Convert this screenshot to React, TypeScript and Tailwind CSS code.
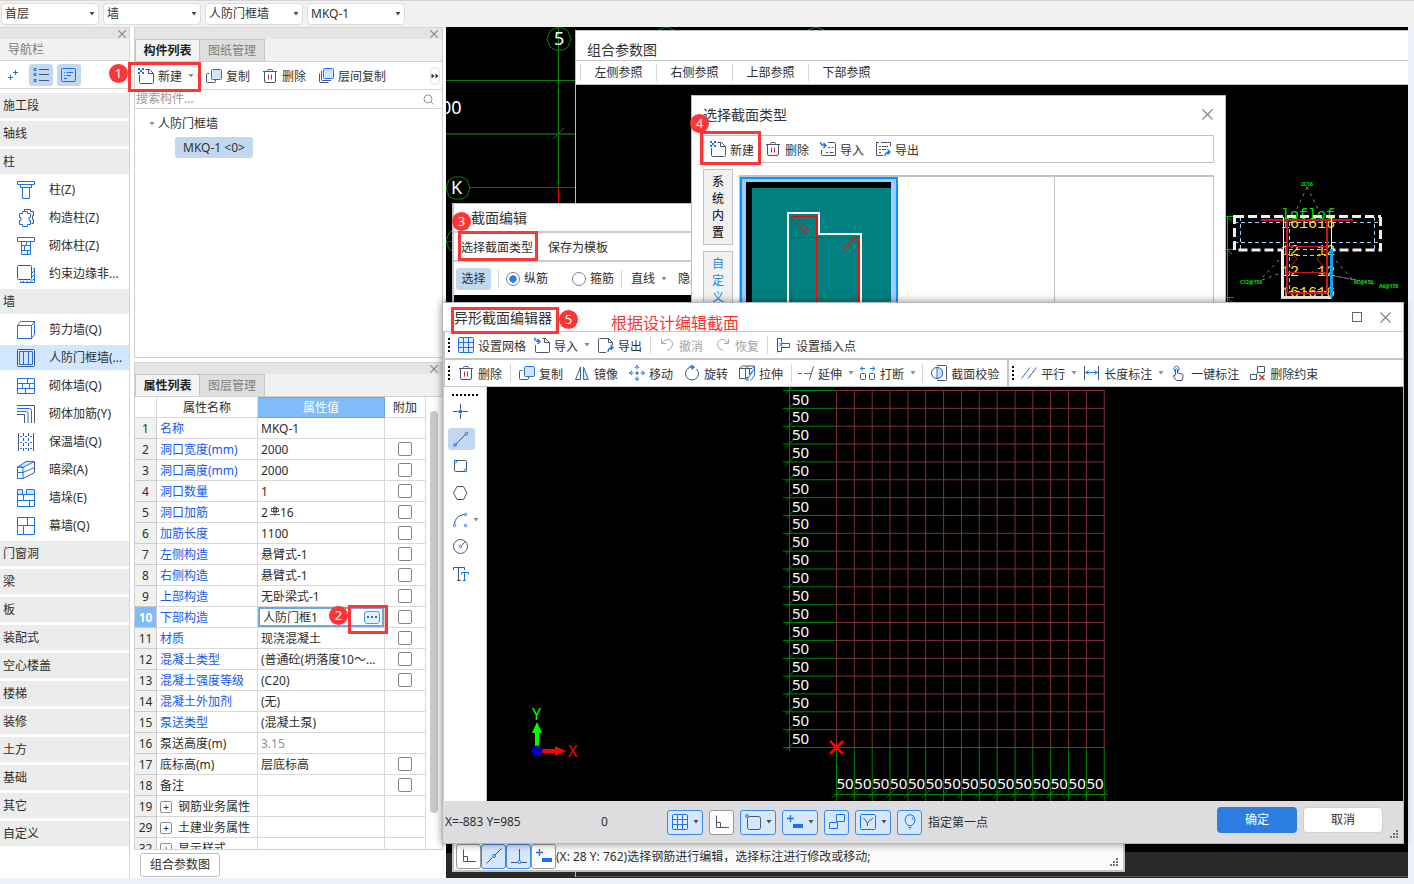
import React from 'react';

const BLUE = '#1a73e8';
const SLATE = '#4a566e';

/* ---------- Icons ---------- */

function Svg({ children, size = 16 }: { children: React.ReactNode; size?: number }) {
  return (
    <svg width={size} height={size} viewBox={`0 0 ${size} ${size}`} fill="none" stroke={SLATE} className="shrink-0" aria-hidden="true">
      {children}
    </svg>
  );
}

const Arrow = ({ dark = false }: { dark?: boolean }) => (
  <svg width="6" height="4" viewBox="0 0 6 4" className="shrink-0" aria-hidden="true">
    <path d="M.5 0h5L3 3.5z" fill={dark ? '#444c5c' : '#8b8b8b'} />
  </svg>
);

const CloseIcon = ({ size = 11 }: { size?: number }) => (
  <svg width={size} height={size} viewBox="0 0 11 11" stroke="#808080" fill="none" aria-hidden="true">
    <path d="M.5.5l10 10M10.5.5l-10 10" strokeWidth={size > 8 ? 1.1 : 1.5} />
  </svg>
);

const NewIcon = () => (
  <Svg>
    <path d="M1.5 7v7.500q0 1 1 1h12q1 0 1-1V5.500l-4-4h-4M10.500 1.500v4h5" />
    <path d="M0 0h2v2H0zM4 0h2v2H4zM2 2h2v2H2zM0 4h2v2H0zM4 4h2v2H4z" fill={BLUE} stroke="none" />
  </Svg>
);

const CopyIcon = () => (
  <Svg>
    <path d="M3.500 5.500h-2q-1 0-1 1v7q0 1 1 1h7q1 0 1-1v-2" />
    <rect x="5.500" y="1.500" width="10" height="10" rx="1" fill="#d3e5fb" stroke={BLUE} />
  </Svg>
);

const TrashIcon = () => (
  <Svg>
    <path d="M1 3.500h14M5.500 3.500v-1q0-1 1-1h3q1 0 1 1v1M2.500 3.500V13q0 1.500 1.500 1.500h8q1.500 0 1.500-1.500V3.500" />
    <path d="M6.500 6.500v5M9.500 6.500v5" stroke="#d9232a" />
  </Svg>
);

const LayerCopyIcon = () => (
  <Svg>
    <rect x="5.500" y=".5" width="10" height="10" rx="1" fill="#d3e5fb" stroke={BLUE} />
    <path d="M3.500 3v8.500q0 1 1 1H13" />
    <path d="M1.500 5.500v8q0 1 1 1h8" />
  </Svg>
);

const GridIcon = () => (
  <Svg>
    <rect x=".5" y=".5" width="15" height="15" rx="1" fill="#e3eefc" stroke={BLUE} />
    <path d="M5.500 0v16M10.500 0v16M0 5.500h16M0 10.500h16" stroke={BLUE} />
  </Svg>
);

const ImportIcon = () => (
  <Svg>
    <path d="M1.500 8v6.500q0 1 1 1h12q1 0 1-1V5.500l-4-4h-3M10.500 1.500v4h5" />
    <path d="M.5.5q0 4 5 4M3.500 2l2.500 2.500L3.500 7" stroke={BLUE} strokeWidth="1.400" />
  </Svg>
);

const ExportIcon = () => (
  <Svg>
    <path d="M8 15.500H1.500q-1 0-1-1v-12q0-1 1-1h9l4 4V8M10.500 1.500v4h4" />
    <path d="M10 15q0-4.500 4.500-4.500M12.500 8l2.500 2.500-2.500 2.500" stroke={BLUE} strokeWidth="1.400" />
  </Svg>
);

const ImportListIcon = () => (
  <Svg>
    <path d="M8 1.500h6.500q1 0 1 1v12h-13q-1 0-1-1V9M6 11.500h2M9.500 11.500h4M8 6.500h2M11.500 6.500h2" />
    <path d="M.5 1q0 3.500 5 3.500M3.500 2L6 4.500 3.500 7" stroke={BLUE} strokeWidth="1.400" />
  </Svg>
);

const ExportListIcon = () => (
  <Svg>
    <path d="M1.500 1v13.500H8M1 1.500h3M6 1.500h9.500v4M4 5.500h2M7 5.500h6M4 8.500h2M7 8.500h4M4 11.500h2" />
    <path d="M10 15q0-4 5-4M12.500 8.500L15 11l-2.500 2.500" stroke={BLUE} strokeWidth="1.400" />
  </Svg>
);

const UndoIcon = ({ flip = false }: { flip?: boolean }) => (
  <Svg>
    <path
      d={flip ? 'M13.500 2v4.500H9M13 6Q9.500 1.500 6 2.500 2 4 2.500 8 3.500 12.500 8 13.500' : 'M2.500 2v4.500H7M3 6q3.500-4.500 7-3.500 4 1.500 3.500 5.500-1 4.500-5.500 5.500'}
      stroke="#a9a9a9"
    />
  </Svg>
);

const InsertPointIcon = () => (
  <Svg>
    <path d="M1.500 1v14.500M1.500 1.500h4v4M1.500 14.500h4v-4M5.500 7.500v-1h8v4h-8v-1" />
    <path d="M3 5.500l4 4M7 5.500l-4 4" stroke={BLUE} />
  </Svg>
);

const MirrorIcon = () => (
  <Svg>
    <path d="M6.500 2v12.500h-5z" />
    <path d="M9.500 2v12.500h5z" fill="#cfe3fb" stroke={BLUE} />
  </Svg>
);

const MoveIcon = () => (
  <Svg>
    <path d="M8 .5v4M8 11.500v4M.5 8h4M11.500 8h4M6 3l2-2.500L10 3M6 13l2 2.500 2-2.500M3 6L.5 8 3 10M13 6l2.500 2-2.500 2" stroke={BLUE} />
    <path d="M6 8h4M8 6v4" />
  </Svg>
);

const RotateIcon = () => (
  <Svg>
    <path d="M6 2.500Q1.500 4 1.500 8.500 2 14.500 8 15q6-.5 6.500-6.500 0-2.500-2-4.500" />
    <path d="M5 2h4M7 0l3 2-2.500 2.500" stroke={BLUE} strokeWidth="1.300" />
  </Svg>
);

const StretchIcon = () => (
  <Svg>
    <path d="M.5 3.500h6v10h-6zM.5 3.500l3-2.500h12L13 3.500H6.500M6.500 13.500L9 12M9.500 1L7 3.500M10.500 3.500V9" />
    <path d="M15.500 1v9L12 15.500M15 4l-5 6M8 14.500l6-8M7 12v3h3" stroke={BLUE} />
  </Svg>
);

const ExtendIcon = () => (
  <Svg>
    <path d="M0 8.500h4M6 8.500h4" stroke={BLUE} />
    <path d="M10.500 8.500h2.500M15.500 1.500l-4 13" />
  </Svg>
);

const BreakIcon = () => (
  <Svg>
    <rect x=".5" y="8.500" width="5" height="6" rx="1" />
    <rect x="9.500" y="8.500" width="5" height="6" rx="1" />
    <path d="M1 3.500h4M3 1.500l-2.500 2L3 5.500M10 3.500h4.500M12.500 1.500l2.500 2-2.500 2" stroke={BLUE} />
  </Svg>
);

const CheckSectionIcon = () => (
  <Svg>
    <path d="M6 .5h8.500q1 0 1 1v13q0 1-1 1H6" />
    <circle cx="6" cy="8" r="5.500" />
    <path d="M6 2.500q5.500.5 5.500 5.500T6 13.500z" fill="#cfe3fb" stroke={BLUE} />
  </Svg>
);

const ParallelIcon = () => (
  <Svg>
    <path d="M.5 13.500L9 2.500" stroke={BLUE} />
    <path d="M7 13.500l8.500-11" />
  </Svg>
);

const LengthIcon = () => (
  <Svg>
    <path d="M.5 1v14M14.500 1v14" />
    <path d="M1 7.500h13M4.500 5.500L2 7.500l2.500 2M10.500 5.500l2.500 2-2.500 2" stroke={BLUE} />
  </Svg>
);

const TouchIcon = () => (
  <Svg>
    <path d="M4 6.500Q2 4 3.500 2t4 0q1.500 2-.5 4.500" stroke={BLUE} />
    <path d="M4.500 10V4.500q1-1.500 2 0V8l4.500 1q1.500.5 1 3l-1 3.500H5.500L2 11q.5-1.500 2.500 0" />
  </Svg>
);

const RemoveConstraintIcon = () => (
  <Svg>
    <path d="M7.500 1.500h7v6h-7zM.5 9.500h6v5h-6zM6.500 9.500l1-2" />
    <path d="M9.500 10l5 5M14.500 10l-5 5" stroke="#d9232a" strokeWidth="1.300" />
  </Svg>
);

const CornerIcon = () => (
  <Svg>
    <path d="M2.500 1.500v12H15M2.500 8.500h4v5" />
  </Svg>
);

const PlusBarIcon = () => (
  <Svg>
    <path d="M0 4.500h7M3.500 1v7" stroke={BLUE} strokeWidth="1.300" />
    <rect x="6.500" y="10.500" width="9" height="3" fill={BLUE} stroke={BLUE} />
  </Svg>
);

const LineSnapIcon = () => (
  <Svg>
    <path d="M.5 15.500l6-6M9 7l6.500-6.500" />
    <circle cx="8" cy="8" r="1.500" stroke={BLUE} />
  </Svg>
);

const PerpIcon = () => (
  <Svg>
    <path d="M8.500 1v11M0 14.500h6.500M10.500 14.500H16" />
    <circle cx="8.500" cy="14" r="1.500" stroke={BLUE} />
  </Svg>
);

const SnapBoxIcon = () => (
  <Svg>
    <rect x="2.500" y="2.500" width="13" height="13" rx="2" />
    <circle cx="2" cy="2" r="1.500" stroke={BLUE} fill="#d6e6fb" />
  </Svg>
);

const LinkBoxIcon = () => (
  <Svg>
    <path d="M7.500.5h8v7h-8zM.5 8.500h8v6h-8z" stroke={BLUE} />
  </Svg>
);

const AngleBoxIcon = () => (
  <Svg>
    <rect x=".5" y=".5" width="15" height="15" rx="1" stroke={BLUE} />
    <path d="M13 4L7 9M3.500 4l4 5v3" />
  </Svg>
);

const BulbIcon = () => (
  <Svg>
    <path d="M6 11.500Q3 9 3 5.500 3.500 1 8 .5q4.500.5 5 5 0 3.500-3 6zM6.500 13.500h3M7.500 15.500h1M10 3.500l1 2" stroke={BLUE} />
  </Svg>
);

/* ---------- Navigation icons ---------- */

const navIcons: Record<string, React.ReactNode> = {
  column: <path d="M.5.5h17v3H.5zM3.500 3.500v3h11v-3M5.500 6.500v11h7v-11" />,
  structural: (
    <>
      <path d="M7.500 2V.5h6v2h3v4h-1v4h1v4h-2" stroke={SLATE} />
      <path d="M5.500 2.500h5v2h3v4h-1.500v3h1.500v4h-3v2h-5v-2h-3v-4H4v-3H2.500v-4h3z" />
    </>
  ),
  brickColumn: <path d="M.5.5h17v4H.5zM4.500 4.500v13h9v-13M4.500 8.500h9M4.500 13.500h9M9.500 5v4M7.500 9v4M10.500 13v4" />,
  edge: (
    <>
      <path d="M16 3.500h1.500v14H3.500V16M17 6l-2 2M17 10l-2 2M7 16l-2 1.500M11 16l-2 1.500M17 14l-4 3" />
      <rect x=".5" y=".5" width="14" height="14" rx="1" fill="#fff" stroke={SLATE} />
    </>
  ),
  shear: <path d="M.5 4.500h14v13H.5zM.5 4.500l3-4h14l-3 4M17.500.5v13l-3 4" />,
  doorWall: (
    <>
      <rect x=".5" y=".5" width="17" height="17" rx="1" stroke={SLATE} />
      <path d="M2.500 2.500h13v13h-13zM6.500 2.500v13M11.500 2.500v13" />
    </>
  ),
  brick: <path d="M.5 1.500h17v15H.5zM.5 6.500h17M.5 11.500h17M10.500 1.500v5M5.500 6.500v5M12.500 6.500v5M8.500 11.500v5" />,
  rebar: (
    <>
      <path d="M0 .5h17.500V18M0 9.500h7.500V18" stroke={SLATE} />
      <path d="M0 3.500h12.500q2 0 2 2V18M0 6.500h9.500q1.500 0 1.500 2V18" />
    </>
  ),
  insulation: (
    <>
      <path d="M1.500 0v18M16.500 0v18" stroke={SLATE} />
      <path d="M6.500 0v18M11.500 0v18" strokeDasharray="3 2" stroke={SLATE} />
      <path d="M3 3.500h2M8 3.500h2M13 3.500h2M3 9.500h2M8 9.500h2M13 9.500h2M3 15.500h2M8 15.500h2M13 15.500h2" />
    </>
  ),
  beam: (
    <>
      <path d="M6 17.500l11.500-6V1" stroke={SLATE} />
      <path d="M.5 6L9 .5h8.500L6 6.500z" fill="#cfe3fb" />
      <path d="M.5 6h5.500v11.500H.5zM.5 11.500H6l11.500-5" />
    </>
  ),
  pier: (
    <>
      <path d="M.5.5h5v5h-5zM9.500.5h8v5h-8z" fill="#cfe3fb" />
      <path d="M.5 5.500h17v12H.5zM.5 11.500h17M6.500 5.500v6M12.500 11.500v6" />
    </>
  ),
  curtain: <path d="M.5.5h17v17H.5zM.5 8.500h17M10.500.5v8M6.500 8.500v9" />,
};

/* ---------- Shared pieces ---------- */

function Tool({ icon, label, arrow = false, disabled = false }: { icon: React.ReactNode; label: string; arrow?: boolean; disabled?: boolean }) {
  return (
    <button type="button" disabled={disabled} className="flex h-6 shrink-0 items-center gap-1 whitespace-nowrap text-[#333] disabled:text-[#a3a3a3]">
      {icon}
      <span className="pt-[3px]">{label}</span>
      {arrow && (
        <span className="pl-0.5">
          <Arrow />
        </span>
      )}
    </button>
  );
}

const Sep = () => <span className="h-[18px] w-px shrink-0 bg-[#d0d3d8]" />;

const Handle = () => <span className="h-[14px] w-0 shrink-0 border-l-2 border-dotted border-black" />;

const Grip = () => (
  <svg width="9" height="9" viewBox="0 0 9 9" fill="#70757d" aria-hidden="true">
    <path d="M6 0h2v2H6zM3 3h2v2H3zM6 3h2v2H6zM0 6h2v2H0zM3 6h2v2H3zM6 6h2v2H6z" />
  </svg>
);

function Callout({ n, box, badge }: { n: number; box: string; badge: string }) {
  return (
    <>
      <span className={`pointer-events-none absolute z-10 border-[3px] border-[#fb3636] ${box}`} />
      <span className={`absolute z-10 flex size-[19px] items-center justify-center rounded-full bg-[#fb3636] text-[13px] leading-none text-white ${badge}`}>{n}</span>
    </>
  );
}

function PanelTabs({ tabs }: { tabs: string[] }) {
  return (
    <>
      <div className="flex h-3 shrink-0 items-center justify-end border-t border-[#d6d6d6] bg-[#e5e5e5] pr-1">
        <button type="button" aria-label="关闭">
          <CloseIcon size={8} />
        </button>
      </div>
      <div className="flex h-[23px] shrink-0 border-b border-[#cfcfcf] bg-[#f1f1f1]" role="tablist">
        {tabs.map((tab, i) => (
          <button
            key={tab}
            type="button"
            role="tab"
            aria-selected={i === 0}
            className={`w-[65px] border border-b-0 border-[#c3c5ca] ${i === 0 ? 'bg-[#f4f4f4] font-bold text-[#222]' : 'border-l-0 bg-[#dedede] text-[#808080]'}`}
          >
            {tab}
          </button>
        ))}
      </div>
    </>
  );
}

/* ---------- Top bar ---------- */

function TopBar() {
  const selects = [
    { label: '楼层', value: '首层' },
    { label: '构件大类', value: '墙' },
    { label: '构件类型', value: '人防门框墙' },
    { label: '构件', value: 'MKQ-1' },
  ];
  return (
    <header className="flex h-[27px] shrink-0 items-center gap-1 border-t border-[#d5d5d5] bg-[#f1f1f1] pl-px">
      {selects.map((s) => (
        <div key={s.value} className="relative">
          <select aria-label={s.label} className="h-[22px] w-[98px] appearance-none rounded border border-[#dcdcdc] bg-white pl-[3px] text-[#333]">
            <option>{s.value}</option>
          </select>
          <span className="pointer-events-none absolute top-[9px] right-1">
            <Arrow dark />
          </span>
        </div>
      ))}
    </header>
  );
}

/* ---------- Left navigation ---------- */

type NavRow = { label: string; icon?: string; active?: boolean };

const navRows: NavRow[] = [
  { label: '施工段' },
  { label: '轴线' },
  { label: '柱' },
  { label: '柱(Z)', icon: 'column' },
  { label: '构造柱(Z)', icon: 'structural' },
  { label: '砌体柱(Z)', icon: 'brickColumn' },
  { label: '约束边缘非...', icon: 'edge' },
  { label: '墙' },
  { label: '剪力墙(Q)', icon: 'shear' },
  { label: '人防门框墙(...', icon: 'doorWall', active: true },
  { label: '砌体墙(Q)', icon: 'brick' },
  { label: '砌体加筋(Y)', icon: 'rebar' },
  { label: '保温墙(Q)', icon: 'insulation' },
  { label: '暗梁(A)', icon: 'beam' },
  { label: '墙垛(E)', icon: 'pier' },
  { label: '幕墙(Q)', icon: 'curtain' },
  { label: '门窗洞' },
  { label: '梁' },
  { label: '板' },
  { label: '装配式' },
  { label: '空心楼盖' },
  { label: '楼梯' },
  { label: '装修' },
  { label: '土方' },
  { label: '基础' },
  { label: '其它' },
  { label: '自定义' },
];

function NavPanel() {
  return (
    <nav className="flex w-[130px] shrink-0 flex-col border-r border-[#d6d6d6] bg-white">
      <div className="flex h-3 shrink-0 items-center justify-end border-t border-[#d6d6d6] bg-[#e5e5e5] pr-[3px]">
        <button type="button" aria-label="关闭">
          <CloseIcon size={8} />
        </button>
      </div>
      <div className="flex h-[22px] shrink-0 items-center border-b border-[#d6d6d6] bg-[#f1f1f1] pl-2 text-[#7a7a7a]">导航栏</div>
      <div className="flex h-7 shrink-0 items-center gap-1 border-b border-[#d6d6d6] pl-1">
        <button type="button" aria-label="添加" className="flex h-[22px] w-[21px] items-center pl-1">
          <svg width="10" height="10" viewBox="0 0 10 10" stroke={BLUE} fill="none">
            <path d="M7.500 0v5M5 2.500h5M2.500 5v5M0 7.500h5" />
          </svg>
        </button>
        <button type="button" aria-label="列表" className="flex h-[22px] w-6 items-center justify-center rounded-[3px] bg-[#c1d8f0]">
          <Svg>
            <path d="M6 2.500h10M6 7.500h10M6 13.500h10" />
            <path d="M1 1.500h2v2H1zM1 6.500h2v2H1zM1 12.500h2v2H1z" stroke={BLUE} />
          </Svg>
        </button>
        <button type="button" aria-label="详情" className="flex h-[22px] w-6 items-center justify-center rounded-[3px] bg-[#c1d8f0]">
          <Svg>
            <rect x=".5" y="1.500" width="14" height="13" rx="1" stroke={BLUE} />
            <path d="M3 5.500h1M5.500 5.500H12M3 8.500h1M5.500 8.500H10M3 11.500h3" stroke={BLUE} />
          </Svg>
        </button>
      </div>
      <ul className="flex flex-col gap-[3px] pt-1">
        {navRows.map((row) => (
          <li key={row.label}>
            {row.icon ? (
              <button type="button" className={`flex h-[25px] w-full items-center gap-3.5 pl-[17px] whitespace-nowrap ${row.active ? 'bg-[#d2e7ff]' : ''}`}>
                <svg width="18" height="18" viewBox="0 0 18 18" fill="none" stroke={BLUE} className="shrink-0" aria-hidden="true">
                  {navIcons[row.icon]}
                </svg>
                {row.label}
              </button>
            ) : (
              <button type="button" className="flex h-[25px] w-full items-center bg-[#ececec] pl-[3px]">
                {row.label}
              </button>
            )}
          </li>
        ))}
      </ul>
    </nav>
  );
}

/* ---------- Component list ---------- */

function ComponentList() {
  return (
    <section className="relative flex h-[331px] shrink-0 flex-col border border-t-0 border-[#d0d0d0] bg-white">
      <PanelTabs tabs={['构件列表', '图纸管理']} />
      <div className="flex h-7 shrink-0 items-center gap-3 border-b border-[#d6d6d6] pl-[3px]">
        <Tool icon={<NewIcon />} label="新建" arrow />
        <Tool icon={<CopyIcon />} label="复制" />
        <Tool icon={<TrashIcon />} label="删除" />
        <Tool icon={<LayerCopyIcon />} label="层间复制" />
        <button type="button" aria-label="更多" className="mr-0.5 ml-auto flex h-[18px] w-2.5 items-center justify-center rounded border border-[#e4e4e4]">
          <svg width="8" height="6" viewBox="0 0 8 6" fill="#333" className="shrink-0">
            <path d="M.5.5L3.500 3l-3 2.500zM4.500.5l3 2.500-3 2.500z" />
          </svg>
        </button>
      </div>
      <div className="flex h-[19px] shrink-0 items-center border-b border-[#d6d6d6] pr-2 pl-px">
        <input type="text" aria-label="搜索构件" placeholder="搜索构件..." className="min-w-0 flex-1 outline-none placeholder:text-[#9a9a9a]" />
        <svg width="11" height="11" viewBox="0 0 11 11" fill="none" stroke="#999" aria-hidden="true">
          <circle cx="5" cy="5" r="4" />
          <path d="M8 8l2.500 2.500" />
        </svg>
      </div>
      <div className="flex flex-col items-start gap-[3px] pt-[5px] pl-3.5">
        <div className="flex h-5 items-center gap-[3px]">
          <Arrow />
          <span>人防门框墙</span>
        </div>
        <button type="button" className="ml-[26px] h-[21px] w-[78px] rounded-[3px] bg-[#c1d8f0] text-[#333]">
          MKQ-1 &lt;0&gt;
        </button>
      </div>
      <Callout n={1} box="top-[35px] left-[-7px] h-[30px] w-[73px]" badge="top-[37px] left-[-26px]" />
    </section>
  );
}

/* ---------- Property table ---------- */

type Prop = {
  no: number;
  name: string;
  value?: React.ReactNode;
  plain?: boolean;
  check?: boolean;
  muted?: boolean;
  editing?: boolean;
  group?: boolean;
};

const Rebar = () => (
  <svg width="10" height="10" viewBox="0 0 10 10" fill="none" stroke="#333" className="ml-0.5 inline-block align-[1px]" aria-label="三级钢">
    <path d="M5 0v10M0 8.500h10M1.500 2.500h7v3h-7zM3.500 1v6M6.500 1v6" strokeWidth=".8" />
  </svg>
);

const properties: Prop[] = [
  { no: 1, name: '名称', value: 'MKQ-1' },
  { no: 2, name: '洞口宽度(mm)', value: '2000', check: true },
  { no: 3, name: '洞口高度(mm)', value: '2000', check: true },
  { no: 4, name: '洞口数量', value: '1', check: true },
  { no: 5, name: '洞口加筋', value: <>2<Rebar />16</>, check: true },
  { no: 6, name: '加筋长度', value: '1100', check: true },
  { no: 7, name: '左侧构造', value: '悬臂式-1', check: true },
  { no: 8, name: '右侧构造', value: '悬臂式-1', check: true },
  { no: 9, name: '上部构造', value: '无卧梁式-1', check: true },
  { no: 10, name: '下部构造', value: '人防门框1', check: true, editing: true },
  { no: 11, name: '材质', value: '现浇混凝土', check: true },
  { no: 12, name: '混凝土类型', value: '(普通砼(坍落度10～...', check: true },
  { no: 13, name: '混凝土强度等级', value: '(C20)', check: true },
  { no: 14, name: '混凝土外加剂', value: '(无)' },
  { no: 15, name: '泵送类型', value: '(混凝土泵)' },
  { no: 16, name: '泵送高度(m)', value: '3.15', plain: true, muted: true },
  { no: 17, name: '底标高(m)', value: '层底标高', plain: true, check: true },
  { no: 18, name: '备注', plain: true, check: true },
  { no: 19, name: '钢筋业务属性', plain: true, group: true },
  { no: 29, name: '土建业务属性', plain: true, group: true },
  { no: 32, name: '显示样式', plain: true, group: true },
];

function PropertyRow({ p }: { p: Prop }) {
  return (
    <tr className="h-[21px]">
      <th scope="row" className={`border-r border-b border-[#cbcbcb] p-0 pt-0.5 text-center ${p.editing ? 'bg-[#80bbfa] font-bold text-white' : 'bg-[#f1f1f1] font-normal'}`}>
        {p.no}
      </th>
      <td className={`border-r border-b border-[#d9d9d9] p-0 pt-0.5 pl-[3px] whitespace-nowrap ${p.plain ? '' : 'text-[#1459f0]'}`}>
        {p.group ? (
          <span className="flex items-center gap-1.5">
            <button type="button" aria-label={`展开${p.name}`} className="flex size-3 items-center justify-center rounded-[2px] border border-[#8c8c8c] text-[10px] leading-none">
              +
            </button>
            {p.name}
          </span>
        ) : (
          p.name
        )}
      </td>
      <td className={`relative border-r border-b border-[#d9d9d9] p-0 whitespace-nowrap ${p.muted ? 'text-[#8e8e8e]' : ''}`}>
        {p.editing ? (
          <>
            <div className="flex h-5 items-center border-2 border-[#6ba6e6] pr-0.5 pl-[3px]">
              <input type="text" aria-label={p.name} defaultValue="人防门框1" className="w-0 min-w-0 flex-1 pt-px outline-none" />
              <button type="button" aria-label="选择" className="flex h-[13px] w-4 items-center justify-center rounded-[3px] border border-[#4d97e6] bg-[#e4f0fd]">
                <svg width="10" height="2" viewBox="0 0 10 2" fill={BLUE}>
                  <path d="M0 0h2v2H0zM4 0h2v2H4zM8 0h2v2H8z" />
                </svg>
              </button>
            </div>
            <Callout n={2} box="top-[-2px] left-[90px] h-[29px] w-10" badge="-top-px left-[71px]" />
          </>
        ) : (
          <div className="pt-0.5 pl-[3px]">{p.value}</div>
        )}
      </td>
      <td className="border-r border-b border-[#d9d9d9] p-0 text-center">
        {p.check && <input type="checkbox" aria-label={`附加${p.name}`} className="mx-auto block size-3.5 appearance-none rounded-[2px] border border-[#858585] bg-white" />}
      </td>
    </tr>
  );
}

function PropertyPanel() {
  return (
    <section className="flex min-h-0 flex-1 flex-col border border-t-0 border-[#d0d0d0] bg-white">
      <PanelTabs tabs={['属性列表', '图层管理']} />
      <div className="flex min-h-0 flex-1 overflow-hidden">
        <div className="min-w-0 flex-1">
          <table className="w-full table-fixed border-separate border-spacing-0">
            <colgroup>
              <col className="w-[22px]" />
              <col className="w-[101px]" />
              <col />
              <col className="w-[41px]" />
            </colgroup>
            <thead>
              <tr className="h-[21px]">
                <th className="border-r border-b border-[#d9d9d9] p-0" />
                <th className="border-r border-b border-[#d9d9d9] p-0 pt-0.5 font-normal">属性名称</th>
                <th className="border border-l-0 border-[#6ba6e6] bg-[#80bbfa] p-0 font-normal text-white">属性值</th>
                <th className="border-r border-b border-[#d9d9d9] p-0 pt-0.5 font-normal">附加</th>
              </tr>
            </thead>
            <tbody>
              {properties.map((p) => (
                <PropertyRow key={p.no} p={p} />
              ))}
            </tbody>
          </table>
        </div>
        <div className="w-4 shrink-0 pt-3.5 pl-1">
          <div className="h-[402px] w-2 rounded-full bg-[#c9c9c9]" />
        </div>
      </div>
    </section>
  );
}

/* ---------- CAD background ---------- */

const ring = (cx: number, cy: number) => {
  const pts = [[-4, -11], [4, -11], [9, -8], [12, 0], [9, 8], [4, 11], [-4, 11], [-9, 8], [-12, 0], [-9, -8]];
  return pts.map(([x, y]) => `${cx + x},${cy + y}`).join(' ');
};

// model coordinates start at the corner of the application window
function AxisBackdrop() {
  return (
    <svg className="absolute inset-0 size-full" aria-hidden="true">
      <g transform="translate(-446 -27)" fill="none">
        <path d="M446 80.500h140M558.500 27v160" stroke="#0a820a" />
        <path d="M446 134h140" stroke="#064f06" strokeWidth="2" />
        <path d="M553 139l11-11" stroke="#0a820a" />
        <path d="M470 187.500h110M558.500 188v20M446 241.500h8" stroke="#e00000" />
        <polygon points={ring(559, 39)} stroke="#0a820a" />
        <polygon points={ring(458, 188)} stroke="#0a820a" />
        <polygon points={ring(458, 241)} stroke="#0a820a" />
        <path d="M658 30l8-3 8 3M808 30l8-3 8 3" stroke="#0a820a" />
        <g fill="#fff" fontSize="18">
          <text x="554" y="45">5</text>
          <text x="451" y="194">K</text>
          <text x="441" y="114">00</text>
        </g>
        <path d="M1404 355.500h4M1404 368.500h4" stroke="#1a8080" />
      </g>
    </svg>
  );
}

function DoorFrameDrawing() {
  return (
    <svg className="absolute inset-0 size-full" aria-hidden="true">
      <g transform="translate(-576 -85)" fill="none">
        <path d="M1227.500 216v90M1226 216.500h8M1226 249.500h8M1226 297.500h8M1227 217l5 4M1227 250l5 4M1227 298l5 4" stroke="#00b400" />
        <g stroke="#8a8a8a" strokeDasharray="3 4">
          <path d="M1307 187l-12 26M1307 187l13 26M1279 260l-18 19M1278 274l-16 6M1336 261l17 19M1312 272l45 8M1316 272l62 13" />
        </g>
        <g stroke="#a9cbf5" strokeDasharray="4 3">
          <path d="M1234 222.500h146M1234 242.500h146M1240.500 217v32M1374.500 217v32M1289.500 222v70M1326.500 222v70M1289 249.500h38M1289 255.500h38M1289 291.500h38" />
        </g>
        <g fontFamily="'Liberation Mono', monospace" fontSize="15">
          <g fill="#ffe03a">
            <text x="1281" y="228">161616</text>
            <text x="1281" y="255">12</text>
            <text x="1317" y="255">12</text>
            <text x="1281" y="276">12</text>
            <text x="1317" y="276">12</text>
            <text x="1281" y="297">161616</text>
          </g>
          <text x="1281" y="219" fill="#00e400">loflof</text>
        </g>
        <g stroke="#c8171e">
          <path d="M1261 220h92M1287 220v72q0 1 1 1h38q1 0 1-1v-72" strokeWidth="2" />
          <path d="M1287 246.500h40M1287 272.500h40M1289 250l8 9-8 9M1325 250l-8 9 8 9" />
        </g>
        <path d="M1235 216.500h146" stroke="#eee" strokeWidth="3" strokeDasharray="9 4" />
        <path d="M1234.500 215v35h48M1380.500 217v33h-49" stroke="#eee" strokeWidth="3" strokeDasharray="9 4" />
        <path d="M1283.500 217v33M1331.500 217v33" stroke="#fff" />
        <path d="M1282.500 249v48.500h49" stroke="#eee" strokeWidth="3" />
        <path d="M1331.500 249v48" stroke="#0aa5f5" strokeWidth="3" />
        <g fill="#00e400" fontSize="5" fontWeight="700">
          <text x="1301" y="186">2C16</text>
          <text x="1240" y="284">C12@150</text>
          <text x="1354" y="284">6C@150</text>
          <text x="1379" y="288">A6@150</text>
        </g>
      </g>
    </svg>
  );
}

/* ---------- Windows ---------- */

function ParameterWindow() {
  return (
    <section className="absolute top-[3px] right-0 bottom-px left-[129px] flex flex-col border-t border-l border-[#b9bcc0] bg-white">
      <h2 className="flex h-[29px] shrink-0 items-end pl-[11px] text-[14px] leading-[20px] text-[#333]">组合参数图</h2>
      <div className="flex h-[25px] shrink-0 items-center border-y border-[#bfc2c6] pl-1">
        {['左侧参照', '右侧参照', '上部参照', '下部参照'].map((t) => (
          <button key={t} type="button" className="h-[17px] w-[76px] border-l border-[#d3d5d8] leading-[17px]">
            {t}
          </button>
        ))}
      </div>
      <div className="relative flex-1 overflow-hidden border-b border-[#555] bg-black">
        <DoorFrameDrawing />
        <div className="absolute inset-x-0 bottom-0 h-6 bg-[#292929]" />
      </div>
    </section>
  );
}

function SectionEditWindow() {
  return (
    <section className="absolute top-[176px] bottom-[6px] left-1.5 flex w-[673px] flex-col border-t border-r-2 border-b-2 border-l-2 border-[#c0c3c6] bg-white">
      <h2 className="flex h-[27px] shrink-0 items-center pl-[17px] text-[14px] text-[#333]">截面编辑</h2>
      <div className="flex h-[31px] shrink-0 items-center gap-[15px] border-y-2 border-[#c9cbd0] pt-0.5 pl-[7px]">
        <button type="button">选择截面类型</button>
        <button type="button">保存为模板</button>
      </div>
      <div className="flex h-[33px] shrink-0 items-center gap-[7px] pl-0.5">
        <button type="button" className="h-[22px] w-[35px] rounded-[3px] bg-[#c1d8f0] pt-px">
          选择
        </button>
        <Sep />
        <div className="flex gap-6">
          <label className="flex items-center gap-1">
            <input type="radio" name="bar" defaultChecked className="size-3.5 appearance-none rounded-full border border-[#808080] bg-white bg-[radial-gradient(circle,#2a7de1_40%,transparent_46%)]" />
            纵筋
          </label>
          <label className="flex items-center gap-1">
            <input type="radio" name="bar" className="size-3.5 appearance-none rounded-full border border-[#808080] bg-white" />
            箍筋
          </label>
        </div>
        <Sep />
        <button type="button" className="flex items-center gap-1.5 pt-px pl-0.5">
          直线
          <Arrow />
        </button>
        <button type="button" className="pt-px pl-1">
          隐藏
        </button>
      </div>
      <div className="flex-1 bg-black" />
      <div className="flex h-7 shrink-0 items-center bg-[#fbfbfb] pl-0.5">
        {[<CornerIcon key="c" />, <LineSnapIcon key="l" />, <PerpIcon key="p" />, <PlusBarIcon key="b" />].map((icon, i) => (
          <button
            key={i}
            type="button"
            aria-label={['正交', '线捕捉', '垂足', '偏移'][i]}
            className={`flex size-[25px] items-center justify-center rounded-[3px] border ${i === 1 || i === 2 ? 'border-[#3c8ae6] bg-[#d6e6fb]' : 'border-[#999] bg-white'}`}
          >
            {icon}
          </button>
        ))}
        <span className="pt-0.5">(X: 28 Y: 762)选择钢筋进行编辑，选择标注进行修改或移动;</span>
        <span className="mr-1 ml-auto pt-3">
          <Grip />
        </span>
      </div>
      <Callout n={3} box="top-[27px] left-1 h-[30px] w-[80px]" badge="top-[8px] left-[-2px]" />
    </section>
  );
}

function SectionTypeWindow() {
  return (
    <section className="absolute top-[68px] left-[245px] flex h-[240px] w-[535px] flex-col border border-[#b9bcc0] bg-white px-[11px]">
      <div className="flex h-[39px] shrink-0 items-center justify-between pr-px pb-0.5 text-[#333]">
        <h2 className="text-[14px]">选择截面类型</h2>
        <button type="button" aria-label="关闭">
          <CloseIcon />
        </button>
      </div>
      <div className="flex h-7 shrink-0 items-center gap-[11px] border border-[#c3c3c7] pl-1.5">
        <Tool icon={<NewIcon />} label="新建" />
        <Tool icon={<TrashIcon />} label="删除" />
        <Tool icon={<ImportListIcon />} label="导入" />
        <Tool icon={<ExportListIcon />} label="导出" />
      </div>
      <div className="flex min-h-0 flex-1 gap-1.5 overflow-hidden pt-1.5">
        <div className="flex w-[30px] shrink-0 flex-col gap-1.5" role="tablist">
          <button type="button" role="tab" aria-selected="false" className="border border-[#c3c3c7] bg-[#f1f1f1] px-2 py-[3px] leading-[17px] text-black">
            系统内置
          </button>
          <button type="button" role="tab" aria-selected="true" className="border border-[#c3c3c7] bg-[#f1f1f1] px-2 py-[3px] leading-[17px] text-[#1a8ce0]">
            自定义
          </button>
        </div>
        <div className="mt-1.5 grid flex-1 grid-cols-3 border-t-2 border-r border-l border-[#c3c3c3]">
          <div className="border-2 border-[#0a96ff] bg-[#a3caff] pt-[3px] pr-[5px] pl-1">
            <svg className="block h-[130px] w-full bg-black" aria-hidden="true">
              <g transform="translate(-746 -182)" fill="none">
                <rect x="752" y="188" width="160" height="130" fill="#008080" />
                <path d="M788 318V213h31v21h42v84" stroke="#fff" strokeWidth="2" />
                <path d="M791.500 318V217M791 216.500h25M816.500 216v100M791 237.500h67M858.500 237v80" stroke="#f00" />
                <path d="M791 218l15 16M796 217l14 15M858 240l-12 12M856 237l-12 12" stroke="#f00" />
              </g>
            </svg>
          </div>
          <div className="border-r border-[#c3c3c3]" />
          <div />
        </div>
      </div>
      <Callout n={4} box="top-[35px] left-2 h-[34px] w-[61px]" badge="top-[18px] left-[-2px]" />
    </section>
  );
}

const STEP = 17.85;

function GridDrawing() {
  const cols = Array.from({ length: 16 }, (_, i) => 836.5 + i * STEP);
  const rows = Array.from({ length: 21 }, (_, i) => 390.5 + i * STEP);
  return (
    <svg className="absolute inset-0 size-full" aria-hidden="true">
      <g transform="translate(-487 -387)" fill="none">
        <g stroke="#008400">
          <path d="M789.500 387v364M834 794.500h274" />
          {rows.map((y) => (
            <path key={y} d={`M783 ${y}h53M786 ${y + 3}l7-7`} />
          ))}
          {cols.map((x) => (
            <path key={x} d={`M${x} 748v54M${x - 4} 798l8-8`} />
          ))}
        </g>
        <g stroke="#803038">
          {rows.map((y) => (
            <path key={y} d={`M836 ${y}h268`} />
          ))}
          {cols.map((x) => (
            <path key={x} d={`M${x} 390v358`} />
          ))}
        </g>
        <g fill="#fff" fontSize="15">
          {rows.slice(0, 20).map((y) => (
            <text key={y} x="792" y={y + 14}>50</text>
          ))}
          {cols.slice(0, 15).map((x) => (
            <text key={x} x={x} y="789">50</text>
          ))}
        </g>
        <path d="M830 741l13 13M843 741l-13 13" stroke="#f00" strokeWidth="2.500" />
        <path d="M537 750V728" stroke="#0f0" strokeWidth="4" />
        <path d="M537 722l-5 11h10z" fill="#0f0" />
        <path d="M540 751h16" stroke="#f00" strokeWidth="4" />
        <path d="M566 751l-11-5v10z" fill="#f00" />
        <circle cx="537" cy="751" r="5.500" fill="#0000b4" />
        <text x="532" y="720" fontSize="16" fill="#0f0">Y</text>
        <text x="568" y="757" fontSize="16" fill="#f00">X</text>
      </g>
    </svg>
  );
}

const drawTools: { label: string; icon: React.ReactNode; arrow?: boolean }[] = [
  {
    label: '点',
    icon: (
      <>
        <path d="M7.500 0v5M7.500 10v5M0 7.500h5M10 7.500h5" />
        <circle cx="7.500" cy="7.500" r="2" fill={BLUE} stroke="none" />
      </>
    ),
  },
  {
    label: '直线',
    icon: (
      <>
        <path d="M3 13L13 3" />
        <circle cx="2" cy="14" r="1.300" stroke={BLUE} />
        <circle cx="13.500" cy="2.500" r="1.300" stroke={BLUE} />
      </>
    ),
  },
  {
    label: '矩形',
    icon: (
      <>
        <rect x="1.500" y="2.500" width="12" height="11" rx="1" />
        <circle cx="2.500" cy="3.500" r="1.300" stroke={BLUE} />
        <circle cx="12.500" cy="12.500" r="1.300" stroke={BLUE} />
      </>
    ),
  },
  { label: '多边形', icon: <path d="M4 1.500h6.500L14 8l-3.500 6.500H4L.5 8z" /> },
  {
    label: '弧线',
    arrow: true,
    icon: (
      <>
        <path d="M1.500 12Q2 4 11 2.500" />
        <circle cx="1.500" cy="13.500" r="1.200" stroke={BLUE} />
        <circle cx="12.500" cy="2.500" r="1.200" stroke={BLUE} />
        <circle cx="12.500" cy="13.500" r="1.200" stroke={BLUE} />
      </>
    ),
  },
  {
    label: '圆',
    icon: (
      <>
        <circle cx="7.500" cy="7.500" r="7" />
        <path d="M8.500 6.500l4-4" />
        <circle cx="7.500" cy="7.500" r="1.200" stroke={BLUE} />
      </>
    ),
  },
  {
    label: '文字',
    icon: (
      <>
        <path d="M.5 4V1.500h11V4M5.500 1.500v13M4 14.500h4" />
        <path d="M8.500 8.500v-2h7v2M11.500 6.500v8M10 14.500h3" stroke={BLUE} />
      </>
    ),
  },
];

const statusToggles: { label: string; icon: React.ReactNode; arrow?: boolean; off?: boolean }[] = [
  { label: '网格', icon: <GridIcon />, arrow: true },
  { label: '正交', icon: <CornerIcon />, off: true },
  { label: '捕捉', icon: <SnapBoxIcon />, arrow: true },
  { label: '偏移', icon: <PlusBarIcon />, arrow: true },
  { label: '关联', icon: <LinkBoxIcon /> },
  { label: '角度', icon: <AngleBoxIcon />, arrow: true },
  { label: '提示', icon: <BulbIcon /> },
];

function ShapeEditorWindow() {
  return (
    <section className="absolute top-[275px] right-1 bottom-[34px] left-[-4px] flex flex-col border border-[#b4b8bd] bg-white shadow-[0_0_8px_rgba(0,0,0,0.45)]">
      <div className="flex h-7 shrink-0 items-center gap-3 pr-3 pl-[11px]">
        <h2 className="w-[145px] pt-0.5 text-[14px] text-[#333]">异形截面编辑器</h2>
        <p className="pt-3 text-[16px] text-[#fb3636]">根据设计编辑截面</p>
        <button type="button" aria-label="最大化" className="ml-auto size-2.5 border border-[#666]" />
        <button type="button" aria-label="关闭" className="pl-1.5">
          <CloseIcon />
        </button>
      </div>
      <div className="flex h-[29px] shrink-0 items-center gap-2 border-t border-b-2 border-l-2 border-[#c3c6cc] pl-[3px]">
        <Handle />
        <Tool icon={<GridIcon />} label="设置网格" />
        <Tool icon={<ImportIcon />} label="导入" arrow />
        <Tool icon={<ExportIcon />} label="导出" />
        <Sep />
        <div className="flex gap-3">
          <Tool icon={<UndoIcon />} label="撤消" disabled />
          <Tool icon={<UndoIcon flip />} label="恢复" disabled />
        </div>
        <Sep />
        <Tool icon={<InsertPointIcon />} label="设置插入点" />
      </div>
      <div className="flex h-[27px] shrink-0 items-center gap-2 border-b border-l-2 border-[#c3c6cc] pl-[3px]">
        <Handle />
        <Tool icon={<TrashIcon />} label="删除" />
        <Sep />
        <div className="flex gap-[11px]">
          <Tool icon={<CopyIcon />} label="复制" />
          <Tool icon={<MirrorIcon />} label="镜像" />
          <Tool icon={<MoveIcon />} label="移动" />
          <Tool icon={<RotateIcon />} label="旋转" />
          <Tool icon={<StretchIcon />} label="拉伸" />
        </div>
        <div className="flex items-center gap-1.5">
          <Sep />
          <Tool icon={<ExtendIcon />} label="延伸" arrow />
          <Tool icon={<BreakIcon />} label="打断" arrow />
          <Sep />
        </div>
        <Tool icon={<CheckSectionIcon />} label="截面校验" />
        <div className="flex items-center gap-[7px] self-stretch border-l-2 border-[#c3c6cc] pl-[3px]">
          <Handle />
          <Tool icon={<ParallelIcon />} label="平行" arrow />
          <Tool icon={<LengthIcon />} label="长度标注" arrow />
          <div className="flex gap-[11px]">
            <Tool icon={<TouchIcon />} label="一键标注" />
            <Tool icon={<RemoveConstraintIcon />} label="删除约束" />
          </div>
        </div>
      </div>
      <div className="flex min-h-0 flex-1">
        <div className="flex w-11 shrink-0 flex-col gap-[5px] border-r border-l border-[#c3c6cc] pt-[7px] pl-1">
          <span className="ml-1 w-[26px] border-t-2 border-dotted border-black" />
          {drawTools.map((t, i) => (
            <button key={t.label} type="button" aria-label={t.label} className={`flex h-[22px] items-center rounded-[3px] pl-[5px] ${i === 1 ? 'w-[27px] bg-[#c1d8f0]' : ''}`}>
              <Svg>{t.icon}</Svg>
              {t.arrow && (
                <span className="pl-1">
                  <Arrow />
                </span>
              )}
            </button>
          ))}
        </div>
        <div className="relative flex-1 overflow-hidden bg-black">
          <GridDrawing />
        </div>
      </div>
      <footer className="relative flex h-[42px] shrink-0 items-center gap-1.5 bg-[#dddddf] pr-5 pl-0.5">
        <span className="w-[150px]">X=-883 Y=985</span>
        <span className="w-[60px]">0</span>
        {statusToggles.map((t) => (
          <button
            key={t.label}
            type="button"
            aria-label={t.label}
            className={`flex h-[25px] shrink-0 items-center gap-[5px] rounded-[3px] border pl-1 ${t.arrow ? 'w-9' : 'w-[25px]'} ${t.off ? 'border-[#999] bg-white' : 'border-[#3c8ae6] bg-[#d6e6fb]'}`}
          >
            {t.icon}
            {t.arrow && <Arrow dark />}
          </button>
        ))}
        <span className="pt-px">指定第一点</span>
        <div className="ml-auto flex gap-1.5 pb-1">
          <button type="button" className="h-[26px] w-20 rounded bg-[#2b7de1] text-white">
            确定
          </button>
          <button type="button" className="h-[26px] w-20 rounded border border-[#cfcfd2] bg-white">
            取消
          </button>
        </div>
        <span className="absolute right-1 bottom-1">
          <Grip />
        </span>
      </footer>
      <Callout n={5} box="top-1 left-2 h-[27px] w-[108px]" badge="top-[7px] left-[116px]" />
    </section>
  );
}

export default function App() {
  return (
    <div className="flex h-screen flex-col overflow-hidden bg-[#ecf1fa] pb-1.5 font-['Noto_Sans','Noto_Sans_CJK_SC',sans-serif] text-[12px] leading-[16px] text-[#2e2e2e]">
      <TopBar />
      <div className="flex min-h-0 flex-1 bg-white">
        <NavPanel />
        <div className="flex w-[316px] shrink-0 flex-col pr-[3px] pl-1">
          <ComponentList />
          <div className="h-1 shrink-0" />
          <PropertyPanel />
          <div className="flex h-7 shrink-0 items-center pt-0.5 pl-1.5">
            <button type="button" className="h-6 w-20 rounded-[3px] border border-[#bdbdbd] bg-white">
              组合参数图
            </button>
          </div>
        </div>
        <div className="flex min-w-0 flex-1 bg-[#ecf1fa] pr-1.5">
          <main className="relative flex flex-1 flex-col bg-black">
            <AxisBackdrop />
            <div className="mt-auto h-[25px] bg-[#292929]" />
            <ParameterWindow />
            <SectionEditWindow />
            <SectionTypeWindow />
            <ShapeEditorWindow />
          </main>
        </div>
      </div>
    </div>
  );
}
